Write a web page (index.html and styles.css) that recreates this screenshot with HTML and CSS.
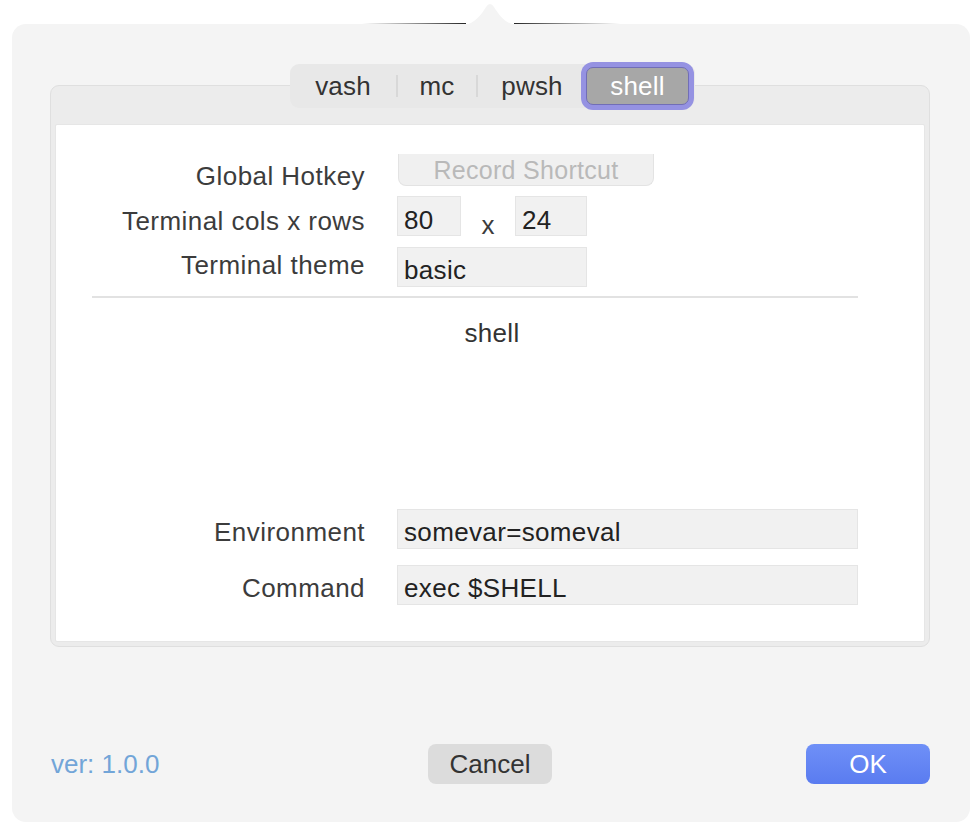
FILE: index.html
```html
<!DOCTYPE html>
<html>
<head>
<meta charset="utf-8">
<link rel="stylesheet" href="styles.css">
</head>
<body>
<div class="dialog">
  <svg class="arrow" width="50" height="23" viewBox="0 0 50 23"><path d="M0 23 C10 21 16 13 21 5 Q25 -1 29 5 C34 13 40 21 50 23 Z" fill="#f4f4f4"/></svg>
  <div class="edge edge-left"></div>
  <div class="edge edge-right"></div>

  <div class="segments">
    <div class="seg seg-vash">vash</div>
    <span class="seg-div"></span>
    <div class="seg seg-mc">mc</div>
    <span class="seg-div"></span>
    <div class="seg seg-pwsh">pwsh</div>
    <div class="seg seg-selected">shell</div>
  </div>

  <div class="tabbox">
    <div class="panel">
      <div class="form form-top">
        <div class="row row-hotkey">
          <div class="label label-hotkey">Global Hotkey</div>
          <div class="shortcut">Record Shortcut</div>
        </div>
        <div class="row row-size">
          <div class="label label-size">Terminal cols x rows</div>
          <div class="field field-cols">80</div>
          <span class="times">x</span>
          <div class="field field-rows">24</div>
        </div>
        <div class="row row-theme">
          <div class="label label-theme">Terminal theme</div>
          <div class="field field-theme">basic</div>
        </div>
        <div class="separator"></div>
      </div>
      <div class="section-title">shell</div>
      <div class="form form-bottom">
        <div class="row row-env">
          <div class="label">Environment</div>
          <div class="field field-wide">somevar=someval</div>
        </div>
        <div class="row row-cmd">
          <div class="label">Command</div>
          <div class="field field-wide">exec $SHELL</div>
        </div>
      </div>
    </div>
  </div>

  <div class="footer">
    <div class="version">ver: 1.0.0</div>
    <div class="btn btn-cancel">Cancel</div>
    <div class="btn btn-ok">OK</div>
  </div>
</div>
</body>
</html>
```

FILE: styles.css
```css
html, body {
  margin: 0;
  padding: 0;
  background: #ffffff;
}

body {
  font-family: "Liberation Sans", Arial, sans-serif;
  font-size: 26px;
  color: #3a3a3a;
}

.dialog {
  position: relative;
  box-sizing: border-box;
  margin: 24px 0 0 12px;
  width: 958px;
  height: 798px;
  background: #f4f4f4;
  border-radius: 14px;
  padding: 39px 40px 38px 38px;
  display: flex;
  flex-direction: column;
}

.arrow {
  position: absolute;
  left: 453px;
  top: -22px;
  display: block;
}

.edge {
  position: absolute;
  top: -1px;
  height: 1px;
}

.edge-left {
  left: 350px;
  width: 104px;
  background: linear-gradient(to right, rgba(0,0,0,0), rgba(0,0,0,0.85));
}

.edge-right {
  left: 502px;
  width: 106px;
  background: linear-gradient(to left, rgba(0,0,0,0), rgba(0,0,0,0.85));
}

/* segmented control */
.segments {
  position: relative;
  z-index: 1;
  align-self: flex-start;
  margin-left: 240px;
  margin-bottom: -23px;
  height: 44px;
  margin-top: 1px;
  background: #e8e8e8;
  border-radius: 9px;
  display: flex;
  align-items: center;
  padding-right: 6px;
  color: #333333;
}

.seg {
  height: 44px;
  line-height: 44px;
  text-align: center;
  letter-spacing: 0.2px;
}

.seg-vash { width: 106px; }
.seg-mc { width: 78px; }
.seg-pwsh { width: 108px; }

.seg-div {
  width: 2px;
  height: 22px;
  background: #d8d8d8;
}

.seg-selected {
  box-sizing: border-box;
  width: 103px;
  height: 38px;
  line-height: 36px;
  background: #a7a7a7;
  color: #ffffff;
  border: 1px solid #716eb6;
  border-radius: 7px;
  box-shadow: 0 0 0 5px #9592e2;
}

/* tab box */
.tabbox {
  box-sizing: border-box;
  height: 562px;
  width: 880px;
  background: #ececec;
  border: 1px solid #dfdfdf;
  border-radius: 9px;
  padding: 39px 5px 5px 5px;
  display: flex;
}

.panel {
  flex: 1;
  background: #ffffff;
  border: 1px solid #e6e6e6;
  border-radius: 2px;
  margin: -1px;
  display: flex;
  flex-direction: column;
}

.form {
  margin: 0 66px 0 36px;
  display: flex;
  flex-direction: column;
}

.form-top {
  padding-top: 29px;
}

.form-bottom {
  margin-top: auto;
  margin-bottom: 36px;
  gap: 16px;
}

.row {
  display: flex;
  align-items: flex-start;
  height: 40px;
}

.row-hotkey { height: 32px; }
.row-size { margin-top: 10px; }
.row-theme { margin-top: 11px; }

.label {
  width: 273px;
  margin-right: 32px;
  text-align: right;
  line-height: 30px;
  padding-top: 8px;
  color: #3c3c3c;
  white-space: nowrap;
  letter-spacing: 0.45px;
}

.label-hotkey { padding-top: 7px; }
.label-size { padding-top: 10px; }
.label-theme { padding-top: 3px; }

.shortcut {
  box-sizing: border-box;
  width: 256px;
  height: 32px;
  margin-left: 1px;
  background: #f0f0f0;
  border: 1px solid #e3e3e3;
  border-top: none;
  border-radius: 0 0 8px 8px;
  font-size: 25px;
  letter-spacing: 0.3px;
  line-height: 28px;
  padding-top: 2px;
  text-align: center;
  color: #b9b9b9;
}

.field {
  box-sizing: border-box;
  height: 40px;
  background: #f1f1f1;
  border: 1px solid #e5e5e5;
  padding: 7px 0 0 6px;
  line-height: 30px;
  color: #222222;
  white-space: nowrap;
  letter-spacing: 0.35px;
}

.field-cols { width: 64px; padding-top: 8px; }
.field-rows { width: 72px; padding-top: 8px; }
.field-theme { width: 190px; padding-top: 7px; }
.field-wide { flex: 1; }

.times {
  width: 54px;
  text-align: center;
  line-height: 30px;
  padding-top: 14px;
  color: #3c3c3c;
}

.separator {
  height: 2px;
  background: #e2e2e2;
  margin-top: 9px;
}

.section-title {
  text-align: center;
  line-height: 30px;
  margin-top: 20px;
  padding-left: 4px;
  color: #333333;
  letter-spacing: 0.3px;
}

/* footer */
.footer {
  margin-top: auto;
  display: grid;
  grid-template-columns: 1fr auto 1fr;
  align-items: center;
  height: 40px;
}

.version {
  padding-left: 1px;
  line-height: 30px;
  color: #72a5d8;
}

.btn {
  width: 124px;
  height: 40px;
  line-height: 40px;
  text-align: center;
  border-radius: 8px;
}

.btn-cancel {
  background: #dcdcdc;
  color: #333333;
}

.btn-ok {
  justify-self: end;
  background: linear-gradient(to bottom, #6f90f7, #5a7cf0);
  color: #ffffff;
}
```
